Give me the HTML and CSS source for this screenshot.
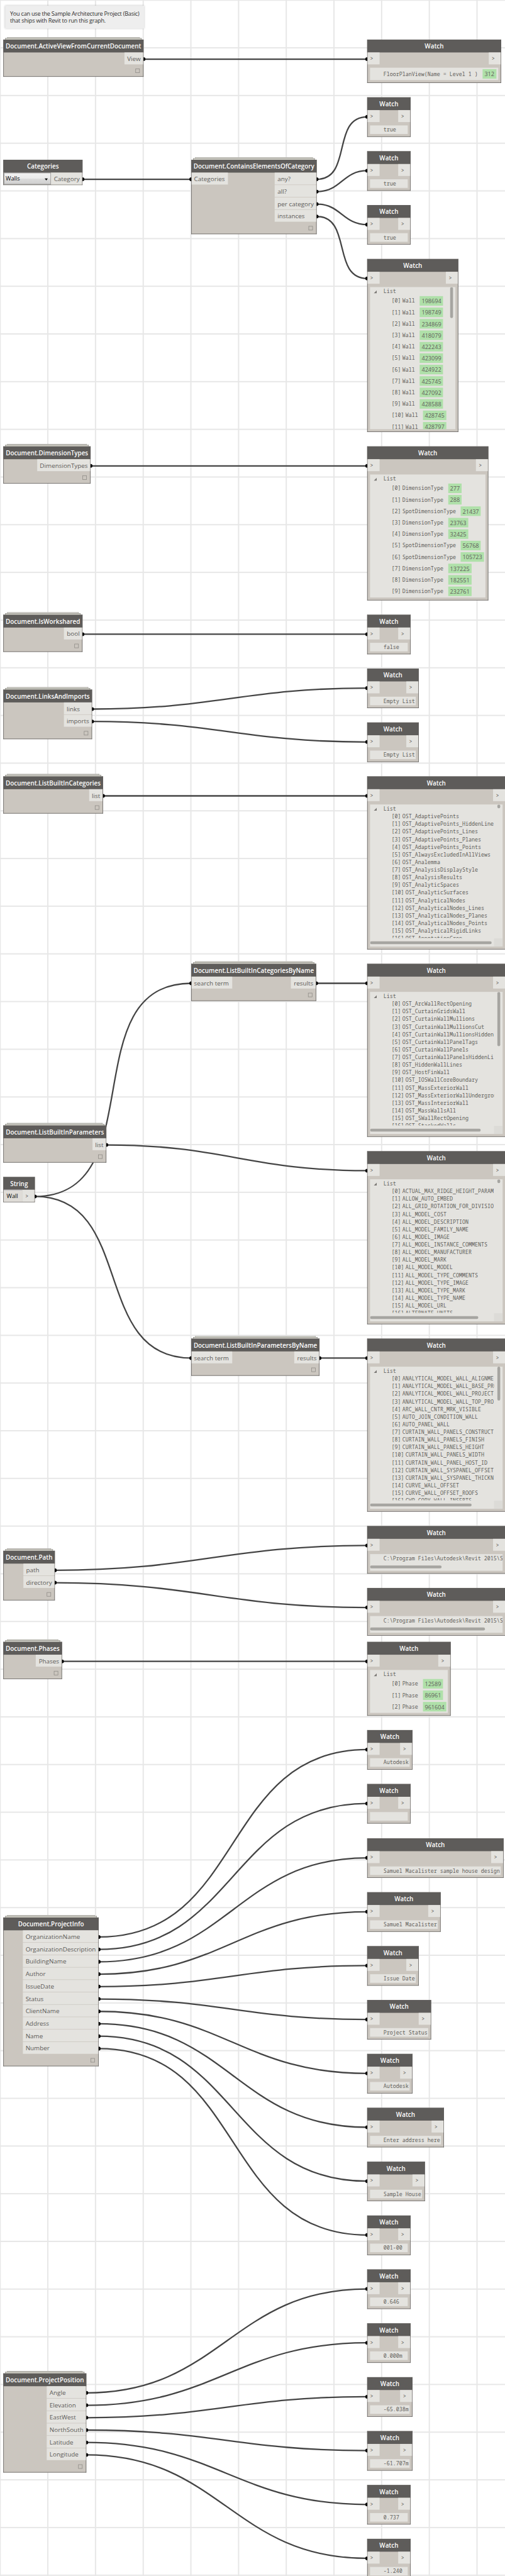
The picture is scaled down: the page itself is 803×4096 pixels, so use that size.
FILE: index.html
```html
<!DOCTYPE html>
<html lang="en">
<head>
<meta charset="utf-8">
<title>Document nodes graph</title>
<link rel="stylesheet" href="styles.css">
</head>
<body>
<main class="viewport">
<div class="canvas">
<svg class="wires" width="1059" height="5402" viewBox="0 0 1059 5402">
  <path d="M301 124H770M173 376H401M190 977H770M173 1330H770M216 1669H770M663 2062H770M670 2848H770M130 3484H770"/>
  <path d="M664 376C740 376 694 245 770 245M664 402C716 402 718 358 770 358M664 428C715 428 719 471 770 471M664 454C739 454 695 584 770 584"/>
  <path d="M193 1487C453 1487 510 1443 770 1443M193 1513C453 1513 510 1556 770 1556"/>
  <path d="M73 2509C323 2509 151 2062 401 2062M73 2509C285 2509 189 2848 401 2848M223 2401C470 2401 523 2455 770 2455"/>
  <path d="M115 3293C411 3293 474 3241 770 3241M115 3319C411 3319 474 3371 770 3371"/>
  <path d="M207 4062C516 4062 461 3669 770 3669M207 4088C495 4088 482 3782 770 3782M207 4114C479 4114 498 3896 770 3896M207 4140C467 4140 510 4009 770 4009M207 4166C461 4166 516 4122 770 4122M207 4192C461 4192 516 4235 770 4235M207 4218C467 4218 510 4348 770 4348M207 4244C479 4244 498 4461 770 4461M207 4270C495 4270 482 4574 770 4574M207 4296C515 4296 462 4687 770 4687"/>
  <path d="M181 5018C464 5018 487 4800 770 4800M181 5044C453 5044 498 4913 770 4913M181 5070C447 5070 504 5026 770 5026M181 5096C447 5096 504 5139 770 5139M181 5122C452 5122 499 5252 770 5252M181 5148C463 5148 488 5365 770 5365"/>
</svg>

<p class="note">You can use the Sample Architecture Project (Basic)<br>that ships with Revit to run this graph.</p>

<section class="node stack" style="--x:7;--y:83;--w:294"><h2>Document.ActiveViewFromCurrentDocument</h2><div class="ports"><ul class="out"><li>View</li></ul></div><footer><i></i></footer></section>

<section class="node" style="--x:7;--y:335;--w:166"><h2>Categories</h2><div class="ports"><div class="select"><span>Walls</span><svg width="8" height="5" viewBox="0 0 8 5"><path d="M.5 0h7L4 4.5z"/></svg></div><ul class="out"><li>Category</li></ul></div></section>

<section class="node stack" style="--x:401;--y:335;--w:263"><h2>Document.ContainsElementsOfCategory</h2><div class="ports"><ul class="in"><li>Categories</li></ul><ul class="out"><li>any?</li><li>all?</li><li>per category</li><li>instances</li></ul></div><footer><i></i></footer></section>

<section class="node stack" style="--x:7;--y:936;--w:183"><h2>Document.DimensionTypes</h2><div class="ports"><ul class="out"><li>DimensionTypes</li></ul></div><footer><i></i></footer></section>

<section class="node stack" style="--x:7;--y:1289;--w:166"><h2>Document.IsWorkshared</h2><div class="ports"><ul class="out"><li>bool</li></ul></div><footer><i></i></footer></section>

<section class="node stack" style="--x:7;--y:1446;--w:186"><h2>Document.LinksAndImports</h2><div class="ports"><ul class="out"><li>links</li><li>imports</li></ul></div><footer><i></i></footer></section>

<section class="node stack" style="--x:7;--y:1628;--w:209"><h2>Document.ListBuiltInCategories</h2><div class="ports"><ul class="out"><li>list</li></ul></div><footer><i></i></footer></section>

<section class="node stack" style="--x:401;--y:2021;--w:262"><h2>Document.ListBuiltInCategoriesByName</h2><div class="ports"><ul class="in"><li>search term</li></ul><ul class="out"><li>results</li></ul></div><footer><i></i></footer></section>

<section class="node stack" style="--x:7;--y:2360;--w:216"><h2>Document.ListBuiltInParameters</h2><div class="ports"><ul class="out"><li>list</li></ul></div><footer><i></i></footer></section>

<section class="node" style="--x:7;--y:2468;--w:66"><h2>String</h2><div class="ports"><div class="field">Wall</div><ul class="out"><li class="arrow">&gt;</li></ul></div></section>

<section class="node stack" style="--x:401;--y:2807;--w:269"><h2>Document.ListBuiltInParametersByName</h2><div class="ports"><ul class="in"><li>search term</li></ul><ul class="out"><li>results</li></ul></div><footer><i></i></footer></section>

<section class="node stack" style="--x:7;--y:3252;--w:108"><h2>Document.Path</h2><div class="ports"><ul class="out"><li>path</li><li>directory</li></ul></div><footer><i></i></footer></section>

<section class="node stack" style="--x:7;--y:3443;--w:123"><h2>Document.Phases</h2><div class="ports"><ul class="out"><li>Phases</li></ul></div><footer><i></i></footer></section>

<section class="node stack" style="--x:7;--y:4021;--w:200"><h2>Document.ProjectInfo</h2><div class="ports"><ul class="out"><li>OrganizationName</li><li>OrganizationDescription</li><li>BuildingName</li><li>Author</li><li>IssueDate</li><li>Status</li><li>ClientName</li><li>Address</li><li>Name</li><li>Number</li></ul></div><footer><i></i></footer></section>

<section class="node stack" style="--x:7;--y:4977;--w:174"><h2>Document.ProjectPosition</h2><div class="ports"><ul class="out"><li>Angle</li><li>Elevation</li><li>EastWest</li><li>NorthSouth</li><li>Latitude</li><li>Longitude</li></ul></div><footer><i></i></footer></section>

<section class="node" style="--x:770;--y:83;--w:281"><h2>Watch</h2><div class="ports"><ul class="in"><li class="arrow">&gt;</li></ul><ul class="out"><li class="arrow">&gt;</li></ul></div><div class="value ids"><p>FloorPlanView(Name = Level 1 )<b>312</b></p></div></section>

<section class="node" style="--x:770;--y:204;--w:91"><h2>Watch</h2><div class="ports"><ul class="in"><li class="arrow">&gt;</li></ul><ul class="out"><li class="arrow">&gt;</li></ul></div><div class="value"><p>true</p></div></section>
<section class="node" style="--x:770;--y:317;--w:91"><h2>Watch</h2><div class="ports"><ul class="in"><li class="arrow">&gt;</li></ul><ul class="out"><li class="arrow">&gt;</li></ul></div><div class="value"><p>true</p></div></section>
<section class="node" style="--x:770;--y:430;--w:91"><h2>Watch</h2><div class="ports"><ul class="in"><li class="arrow">&gt;</li></ul><ul class="out"><li class="arrow">&gt;</li></ul></div><div class="value"><p>true</p></div></section>

<section class="node" style="--x:770;--y:543;--w:191"><h2>Watch</h2><div class="ports"><ul class="in"><li class="arrow">&gt;</li></ul><ul class="out"><li class="arrow">&gt;</li></ul></div>
<div class="value ids tall"><p class="list">List</p><ol>
<li><span>[0]</span>Wall<b>198694</b></li><li><span>[1]</span>Wall<b>198749</b></li><li><span>[2]</span>Wall<b>234869</b></li><li><span>[3]</span>Wall<b>418079</b></li><li><span>[4]</span>Wall<b>422243</b></li><li><span>[5]</span>Wall<b>423099</b></li><li><span>[6]</span>Wall<b>424922</b></li><li><span>[7]</span>Wall<b>425745</b></li><li><span>[8]</span>Wall<b>427092</b></li><li><span>[9]</span>Wall<b>428588</b></li><li><span>[10]</span>Wall<b>428745</b></li><li><span>[11]</span>Wall<b>428797</b></li></ol><i class="vbar" style="--len:65"></i></div></section>

<section class="node" style="--x:770;--y:936;--w:254"><h2>Watch</h2><div class="ports"><ul class="in"><li class="arrow">&gt;</li></ul><ul class="out"><li class="arrow">&gt;</li></ul></div>
<div class="value ids"><p class="list">List</p><ol>
<li><span>[0]</span>DimensionType<b>277</b></li><li><span>[1]</span>DimensionType<b>288</b></li><li><span>[2]</span>SpotDimensionType<b>21437</b></li><li><span>[3]</span>DimensionType<b>23763</b></li><li><span>[4]</span>DimensionType<b>32425</b></li><li><span>[5]</span>SpotDimensionType<b>56768</b></li><li><span>[6]</span>SpotDimensionType<b>105723</b></li><li><span>[7]</span>DimensionType<b>137225</b></li><li><span>[8]</span>DimensionType<b>182551</b></li><li><span>[9]</span>DimensionType<b>232761</b></li></ol></div></section>

<section class="node" style="--x:770;--y:1289;--w:91"><h2>Watch</h2><div class="ports"><ul class="in"><li class="arrow">&gt;</li></ul><ul class="out"><li class="arrow">&gt;</li></ul></div><div class="value"><p>false</p></div></section>
<section class="node" style="--x:770;--y:1402;--w:108"><h2>Watch</h2><div class="ports"><ul class="in"><li class="arrow">&gt;</li></ul><ul class="out"><li class="arrow">&gt;</li></ul></div><div class="value"><p>Empty List</p></div></section>
<section class="node" style="--x:770;--y:1515;--w:108"><h2>Watch</h2><div class="ports"><ul class="in"><li class="arrow">&gt;</li></ul><ul class="out"><li class="arrow">&gt;</li></ul></div><div class="value"><p>Empty List</p></div></section>

<section class="node" style="--x:770;--y:1628;--w:290"><h2>Watch</h2><div class="ports"><ul class="in"><li class="arrow">&gt;</li></ul><ul class="out"><li class="arrow">&gt;</li></ul></div>
<div class="value tall scroll"><div class="clip"><p class="list">List</p><ol>
<li><span>[0]</span>OST_AdaptivePoints</li><li><span>[1]</span>OST_AdaptivePoints_HiddenLine</li><li><span>[2]</span>OST_AdaptivePoints_Lines</li><li><span>[3]</span>OST_AdaptivePoints_Planes</li><li><span>[4]</span>OST_AdaptivePoints_Points</li><li><span>[5]</span>OST_AlwaysExcludedInAllViews</li><li><span>[6]</span>OST_Analemma</li><li><span>[7]</span>OST_AnalysisDisplayStyle</li><li><span>[8]</span>OST_AnalysisResults</li><li><span>[9]</span>OST_AnalyticSpaces</li><li><span>[10]</span>OST_AnalyticSurfaces</li><li><span>[11]</span>OST_AnalyticalNodes</li><li><span>[12]</span>OST_AnalyticalNodes_Lines</li><li><span>[13]</span>OST_AnalyticalNodes_Planes</li><li><span>[14]</span>OST_AnalyticalNodes_Points</li><li><span>[15]</span>OST_AnalyticalRigidLinks</li><li><span>[16]</span>OST_AnnotationCrop</li></ol></div><i class="vbar" style="--len:8"></i><i class="hbar" style="--len:255"></i><i class="corner"></i></div></section>

<section class="node" style="--x:770;--y:2021;--w:290"><h2>Watch</h2><div class="ports"><ul class="in"><li class="arrow">&gt;</li></ul><ul class="out"><li class="arrow">&gt;</li></ul></div>
<div class="value tall scroll"><div class="clip"><p class="list">List</p><ol>
<li><span>[0]</span>OST_ArcWallRectOpening</li><li><span>[1]</span>OST_CurtainGridsWall</li><li><span>[2]</span>OST_CurtainWallMullions</li><li><span>[3]</span>OST_CurtainWallMullionsCut</li><li><span>[4]</span>OST_CurtainWallMullionsHidden</li><li><span>[5]</span>OST_CurtainWallPanelTags</li><li><span>[6]</span>OST_CurtainWallPanels</li><li><span>[7]</span>OST_CurtainWallPanelsHiddenLi</li><li><span>[8]</span>OST_HiddenWallLines</li><li><span>[9]</span>OST_HostFinWall</li><li><span>[10]</span>OST_IOSWallCoreBoundary</li><li><span>[11]</span>OST_MassExteriorWall</li><li><span>[12]</span>OST_MassExteriorWallUndergrou</li><li><span>[13]</span>OST_MassInteriorWall</li><li><span>[14]</span>OST_MassWallsAll</li><li><span>[15]</span>OST_SWallRectOpening</li><li><span>[16]</span>OST_StackedWalls</li></ol></div><i class="vbar" style="--len:114"></i><i class="hbar" style="--len:232"></i><i class="corner"></i></div></section>

<section class="node" style="--x:770;--y:2414;--w:290"><h2>Watch</h2><div class="ports"><ul class="in"><li class="arrow">&gt;</li></ul><ul class="out"><li class="arrow">&gt;</li></ul></div>
<div class="value tall scroll"><div class="clip"><p class="list">List</p><ol>
<li><span>[0]</span>ACTUAL_MAX_RIDGE_HEIGHT_PARAM</li><li><span>[1]</span>ALLOW_AUTO_EMBED</li><li><span>[2]</span>ALL_GRID_ROTATION_FOR_DIVISIO</li><li><span>[3]</span>ALL_MODEL_COST</li><li><span>[4]</span>ALL_MODEL_DESCRIPTION</li><li><span>[5]</span>ALL_MODEL_FAMILY_NAME</li><li><span>[6]</span>ALL_MODEL_IMAGE</li><li><span>[7]</span>ALL_MODEL_INSTANCE_COMMENTS</li><li><span>[8]</span>ALL_MODEL_MANUFACTURER</li><li><span>[9]</span>ALL_MODEL_MARK</li><li><span>[10]</span>ALL_MODEL_MODEL</li><li><span>[11]</span>ALL_MODEL_TYPE_COMMENTS</li><li><span>[12]</span>ALL_MODEL_TYPE_IMAGE</li><li><span>[13]</span>ALL_MODEL_TYPE_MARK</li><li><span>[14]</span>ALL_MODEL_TYPE_NAME</li><li><span>[15]</span>ALL_MODEL_URL</li><li><span>[16]</span>ALTERNATE_UNITS</li></ol></div><i class="vbar" style="--len:8"></i><i class="hbar" style="--len:227"></i><i class="corner"></i></div></section>

<section class="node" style="--x:770;--y:2807;--w:290"><h2>Watch</h2><div class="ports"><ul class="in"><li class="arrow">&gt;</li></ul><ul class="out"><li class="arrow">&gt;</li></ul></div>
<div class="value tall scroll"><div class="clip"><p class="list">List</p><ol>
<li><span>[0]</span>ANALYTICAL_MODEL_WALL_ALIGNME</li><li><span>[1]</span>ANALYTICAL_MODEL_WALL_BASE_PRO</li><li><span>[2]</span>ANALYTICAL_MODEL_WALL_PROJECT</li><li><span>[3]</span>ANALYTICAL_MODEL_WALL_TOP_PRO</li><li><span>[4]</span>ARC_WALL_CNTR_MRK_VISIBLE</li><li><span>[5]</span>AUTO_JOIN_CONDITION_WALL</li><li><span>[6]</span>AUTO_PANEL_WALL</li><li><span>[7]</span>CURTAIN_WALL_PANELS_CONSTRUCT</li><li><span>[8]</span>CURTAIN_WALL_PANELS_FINISH</li><li><span>[9]</span>CURTAIN_WALL_PANELS_HEIGHT</li><li><span>[10]</span>CURTAIN_WALL_PANELS_WIDTH</li><li><span>[11]</span>CURTAIN_WALL_PANEL_HOST_ID</li><li><span>[12]</span>CURTAIN_WALL_SYSPANEL_OFFSET</li><li><span>[13]</span>CURTAIN_WALL_SYSPANEL_THICKN</li><li><span>[14]</span>CURVE_WALL_OFFSET</li><li><span>[15]</span>CURVE_WALL_OFFSET_ROOFS</li><li><span>[16]</span>CWP_COPY_WALL_INSERTS</li></ol></div><i class="vbar" style="--len:71"></i><i class="hbar" style="--len:213"></i><i class="corner"></i></div></section>

<section class="node" style="--x:770;--y:3200;--w:290"><h2>Watch</h2><div class="ports"><ul class="in"><li class="arrow">&gt;</li></ul><ul class="out"><li class="arrow">&gt;</li></ul></div><div class="value path"><p>C:\Program Files\Autodesk\Revit 2015\S</p><i class="hbar" style="--len:150"></i></div></section>
<section class="node" style="--x:770;--y:3330;--w:290"><h2>Watch</h2><div class="ports"><ul class="in"><li class="arrow">&gt;</li></ul><ul class="out"><li class="arrow">&gt;</li></ul></div><div class="value path"><p>C:\Program Files\Autodesk\Revit 2015\S</p><i class="hbar" style="--len:241"></i></div></section>

<section class="node" style="--x:770;--y:3443;--w:175"><h2>Watch</h2><div class="ports"><ul class="in"><li class="arrow">&gt;</li></ul><ul class="out"><li class="arrow">&gt;</li></ul></div><div class="value ids"><p class="list">List</p><ol><li><span>[0]</span>Phase<b>12589</b></li><li><span>[1]</span>Phase<b>86961</b></li><li><span>[2]</span>Phase<b>961604</b></li></ol></div></section>

<section class="node" style="--x:770;--y:3628;--w:95"><h2>Watch</h2><div class="ports"><ul class="in"><li class="arrow">&gt;</li></ul><ul class="out"><li class="arrow">&gt;</li></ul></div><div class="value"><p>Autodesk</p></div></section>
<section class="node" style="--x:770;--y:3741;--w:91"><h2>Watch</h2><div class="ports"><ul class="in"><li class="arrow">&gt;</li></ul><ul class="out"><li class="arrow">&gt;</li></ul></div><div class="value"><p></p></div></section>
<section class="node" style="--x:770;--y:3855;--w:286"><h2>Watch</h2><div class="ports"><ul class="in"><li class="arrow">&gt;</li></ul><ul class="out"><li class="arrow">&gt;</li></ul></div><div class="value"><p>Samuel Macalister sample house design</p></div></section>
<section class="node" style="--x:770;--y:3968;--w:154"><h2>Watch</h2><div class="ports"><ul class="in"><li class="arrow">&gt;</li></ul><ul class="out"><li class="arrow">&gt;</li></ul></div><div class="value"><p>Samuel Macalister</p></div></section>
<section class="node" style="--x:770;--y:4081;--w:108"><h2>Watch</h2><div class="ports"><ul class="in"><li class="arrow">&gt;</li></ul><ul class="out"><li class="arrow">&gt;</li></ul></div><div class="value"><p>Issue Date</p></div></section>
<section class="node" style="--x:770;--y:4194;--w:134"><h2>Watch</h2><div class="ports"><ul class="in"><li class="arrow">&gt;</li></ul><ul class="out"><li class="arrow">&gt;</li></ul></div><div class="value"><p>Project Status</p></div></section>
<section class="node" style="--x:770;--y:4307;--w:95"><h2>Watch</h2><div class="ports"><ul class="in"><li class="arrow">&gt;</li></ul><ul class="out"><li class="arrow">&gt;</li></ul></div><div class="value"><p>Autodesk</p></div></section>
<section class="node" style="--x:770;--y:4420;--w:161"><h2>Watch</h2><div class="ports"><ul class="in"><li class="arrow">&gt;</li></ul><ul class="out"><li class="arrow">&gt;</li></ul></div><div class="value"><p>Enter address here</p></div></section>
<section class="node" style="--x:770;--y:4533;--w:121"><h2>Watch</h2><div class="ports"><ul class="in"><li class="arrow">&gt;</li></ul><ul class="out"><li class="arrow">&gt;</li></ul></div><div class="value"><p>Sample House</p></div></section>
<section class="node" style="--x:770;--y:4646;--w:91"><h2>Watch</h2><div class="ports"><ul class="in"><li class="arrow">&gt;</li></ul><ul class="out"><li class="arrow">&gt;</li></ul></div><div class="value"><p>001-00</p></div></section>

<section class="node" style="--x:770;--y:4759;--w:91"><h2>Watch</h2><div class="ports"><ul class="in"><li class="arrow">&gt;</li></ul><ul class="out"><li class="arrow">&gt;</li></ul></div><div class="value"><p>0.646</p></div></section>
<section class="node" style="--x:770;--y:4872;--w:91"><h2>Watch</h2><div class="ports"><ul class="in"><li class="arrow">&gt;</li></ul><ul class="out"><li class="arrow">&gt;</li></ul></div><div class="value"><p>0.000m</p></div></section>
<section class="node" style="--x:770;--y:4985;--w:95"><h2>Watch</h2><div class="ports"><ul class="in"><li class="arrow">&gt;</li></ul><ul class="out"><li class="arrow">&gt;</li></ul></div><div class="value"><p>-65.038m</p></div></section>
<section class="node" style="--x:770;--y:5098;--w:95"><h2>Watch</h2><div class="ports"><ul class="in"><li class="arrow">&gt;</li></ul><ul class="out"><li class="arrow">&gt;</li></ul></div><div class="value"><p>-61.707m</p></div></section>
<section class="node" style="--x:770;--y:5211;--w:91"><h2>Watch</h2><div class="ports"><ul class="in"><li class="arrow">&gt;</li></ul><ul class="out"><li class="arrow">&gt;</li></ul></div><div class="value"><p>0.737</p></div></section>
<section class="node" style="--x:770;--y:5324;--w:91"><h2>Watch</h2><div class="ports"><ul class="in"><li class="arrow">&gt;</li></ul><ul class="out"><li class="arrow">&gt;</li></ul></div><div class="value"><p>-1.240</p></div></section>
</div>
</main>
</body>
</html>
```
FILE: styles.css
```css
* { box-sizing: border-box; margin: 0; padding: 0; }
ul, ol { list-style: none; }
body { background: #fff; }

.viewport { width: 803px; height: 4096px; overflow: hidden; }

/* The graph is authored at full size and zoomed out to fit the viewport. */
.canvas {
  position: relative;
  width: 1059px;
  height: 5402px;
  overflow: hidden;
  transform: scale(0.75826, 0.75824);
  transform-origin: 0 0;
  font-family: "Open Sans", "Noto Sans", sans-serif;
  background:
    linear-gradient(90deg, #e7e7e7 2px, transparent 2px) -1px 0 / 100px 100px,
    linear-gradient(#e7e7e7 2px, transparent 2px) 0 -1px / 100px 100px,
    #fff;
}

.wires { position: absolute; left: 0; top: 0; fill: none; stroke: #444; stroke-width: 3; }

.note {
  position: absolute;
  left: 11px;
  top: 12px;
  width: 291px;
  height: 48px;
  padding: 10px 0 0 10px;
  background: #eee;
  box-shadow: 0 0 4px rgba(0, 0, 0, .25);
  color: #2c2c2c;
  font-size: 12px;
  line-height: 14px;
  letter-spacing: -.3px;
  white-space: nowrap;
}

.node {
  position: absolute;
  left: calc(var(--x) * 1px);
  top: calc(var(--y) * 1px);
  width: calc(var(--w) * 1px);
  border: 1px solid #5e5c5a;
  border-top: 0;
  background: #cbc6bf;
}
.stack::before, .stack::after {
  content: "";
  position: absolute;
  z-index: -1;
  border: 1px solid #8d8c86;
  border-bottom: 0;
  background: #dcdbd2;
}
.stack::before { left: 7px; right: 7px; top: -5px; height: 3px; border-color: #a9a8a4; }
.stack::after { left: 3px; right: 3px; top: -3px; height: 3px; }

.node h2 {
  height: 27px;
  margin: 0 -1px;
  background: #5e5c5a;
  color: #fff;
  font-size: 13px;
  font-weight: 600;
  line-height: 28px;
  text-align: center;
  white-space: nowrap;
}

.ports { display: flex; align-items: flex-start; }
.ports ul { display: grid; gap: 1px; }
.ports .out { margin-left: auto; }
.ports li {
  position: relative;
  height: 25px;
  padding: 0 5px 0 6px;
  background: #e4e3df;
  color: #5c5a58;
  font-size: 13px;
  line-height: 26px;
  white-space: nowrap;
}
.ports .in li { padding: 0 7px 0 5px; }
.ports .arrow, .ports .in .arrow { width: 25px; padding: 0 0 0 5px; font: 11px/25px "Noto Sans Mono", "DejaVu Sans Mono", monospace; }
.ports .out .arrow { padding-left: 6px; }
.ports li::after {
  content: "";
  position: absolute;
  top: 10px;
  width: 4px;
  height: 8px;
  background: #000;
}
.ports .out li::after { right: -5px; border-radius: 0 4px 4px 0; }
.ports .in li::after { left: -5px; border-radius: 4px 0 0 4px; }
.ports .in + .out .arrow::after { display: none; }

.node footer { display: flex; justify-content: flex-end; height: 25px; padding: 9px 7px 0 0; }
.node footer i { width: 9px; height: 9px; border: 1px solid #8d8a85; }

.select {
  display: flex;
  align-items: center;
  justify-content: space-between;
  width: 99px;
  height: 25px;
  padding: 0 5px 2px 3px;
  border: 1px solid #8a8a8a;
  border-radius: 2px;
  background: linear-gradient(#f2f2f2, #ebebeb 50%, #dcdcdc 51%, #cfcfcf);
  color: #000;
  font-size: 12px;
}
.select svg { margin-top: 5px; }
.field {
  flex: 1;
  height: 25px;
  padding-left: 6px;
  border-top: 1px solid #abadb3;
  background: #dfdcd7;
  color: #000;
  font-size: 12px;
  line-height: 25px;
}

.value {
  position: relative;
  margin: 7px 5px 5px;
  padding: 1px 0 1px 28px;
  background: #e4e3df;
  color: #5f5d5a;
  font: 11px/16px "Noto Sans Mono", "DejaVu Sans Mono", monospace;
  overflow: hidden;
}
.value p, .value li { height: 16px; white-space: pre; }
.value ol { margin-left: 17px; }
.value li span { margin-right: 3px; }
.value b {
  display: inline-block;
  height: 20px;
  margin-left: 10px;
  padding: 0 4px;
  background: #afe0a9;
  font: 12px/21px "Open Sans", sans-serif;
}
.ids li, .ids p:not(.list) { display: flex; align-items: center; height: 24px; }
.list::before {
  content: "";
  position: absolute;
  left: 8px;
  top: 7px;
  border-left: 6px solid transparent;
  border-bottom: 6px solid #7a7875;
}
.tall { height: 298px; }
.clip { height: 279px; width: 232px; overflow: hidden; }
.path { height: 35px; }
.vbar, .hbar, .corner { position: absolute; }
.vbar { right: 5px; top: 0; width: 6px; height: calc(var(--len) * 1px); border-radius: 3px; background: #a6a5a1; }
.hbar { left: 0; bottom: 5px; width: calc(var(--len) * 1px); height: 6px; border-radius: 3px; background: #a6a5a1; }
.corner { right: 0; bottom: 0; width: 18px; height: 17px; background: #dcdbd7; }
```
